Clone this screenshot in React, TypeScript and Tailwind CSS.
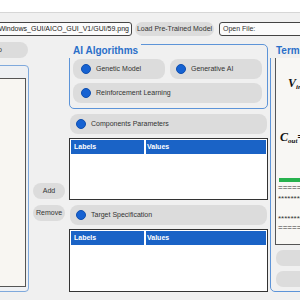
import React from "react";

function Pill({ label, className = "" }: { label: string; className?: string }) {
  return (
    <div className={`flex items-center h-[20px] rounded-[8px] bg-[#dcdcdc] ${className}`}>
      <div className="w-[10px] h-[10px] rounded-full bg-[#1662d2] border border-[#0f4fb0] shrink-0" />
      <span className="ml-[5px] text-[7px] text-[#333] whitespace-nowrap">{label}</span>
    </div>
  );
}

function Table({ h }: { h: string }) {
  return (
    <div className={`${h} border border-[#333] bg-white p-[1px]`}>
      <div className="flex gap-[2px] h-[14px]">
        <div className="w-[73px] bg-[#1a63c6] text-white font-bold text-[7px] leading-[14px] pl-[3px]">Labels</div>
        <div className="flex-1 bg-[#1a63c6] text-white font-bold text-[7px] leading-[14px] pl-[1px]">Values</div>
      </div>
    </div>
  );
}

export default function App() {
  return (
    <div className="w-[300px] h-[300px] overflow-hidden bg-[#f0f0f0] font-['Liberation_Sans',Arial,sans-serif] text-[#222]">
      <div className="h-[13px] bg-white border-b border-[#d6d6d6]" />
      {/* top row */}
      <div className="flex items-center h-[14px] mt-[9px] ml-[-60px] w-[420px]">
        <div className="w-[192px] h-[14px] border border-[#444] rounded-[3px] bg-[#fbfbfb] flex items-center justify-end pr-[2px] overflow-hidden">
          <span className="text-[7px] whitespace-nowrap text-[#222]">-Windows_GUI/AICO_GUI_V1/GUI/59.png</span>
        </div>
        <div className="ml-[3px] w-[79px] h-[14px] rounded-full bg-[#dcdcdc] flex items-center justify-center">
          <span className="text-[7px] whitespace-nowrap text-[#333]">Load Pre-Trained Model</span>
        </div>
        <div className="ml-[5px] w-[120px] h-[14px] border border-[#444] rounded-[3px] bg-[#fbfbfb] flex items-center pl-[3px]">
          <span className="text-[7px] whitespace-nowrap text-[#333]">Open File:</span>
        </div>
      </div>
      {/* main */}
      <div className="flex mt-[6px] ml-[-60px] w-[460px]">
        {/* left column */}
        <div className="w-[89px] flex flex-col shrink-0">
          <div className="w-[88px] h-[16px] rounded-full bg-[#dcdcdc] flex items-center justify-center">
            <span className="text-[7px] text-[#333] whitespace-nowrap">Load Photo</span>
          </div>
          <div className="mt-[7px] h-[227px] border border-[#7fa9dc] rounded-[4px] bg-[#eef0f3] pt-[12px] pr-[2px] pb-[4px]">
            <div className="h-full border border-[#555] bg-[#f8f6f2]" />
          </div>
        </div>
        {/* add/remove */}
        <div className="ml-[4px] w-[32px] flex flex-col pt-[141px] shrink-0">
          <div className="h-[16px] rounded-full bg-[#dcdcdc] flex items-center justify-center text-[7px] text-[#333]">Add</div>
          <div className="mt-[6px] h-[16px] rounded-full bg-[#dcdcdc] flex items-center justify-center text-[7px] text-[#333]">Remove</div>
        </div>
        {/* middle */}
        <div className="ml-[4px] w-[199px] flex flex-col shrink-0">
          <div className="relative mt-[2px] h-[65px] border border-[#5d94d8] rounded-[5px] pt-[14px] pl-[3px] pr-[5px]">
            <div className="absolute left-[-1px] top-[-1px] h-[14px] bg-[#f0f0f0] pl-[4px] pr-[3px] text-[10px] leading-[14px] font-bold text-[#2a6fc9] whitespace-nowrap">AI Algorithms</div>
            <div className="grid grid-cols-2 gap-x-[5px] gap-y-[4px]">
              <Pill label="Genetic Model" className="pl-[8px]" />
              <Pill label="Generative AI" className="pl-[6px]" />
              <Pill label="Reinforcement Learning" className="col-span-2 pl-[8px]" />
            </div>
          </div>
          <Pill label="Components Parameters" className="mt-[5px] ml-[1px] mr-[1px] pl-[6px]" />
          <div className="mt-[4px]"><Table h="h-[62px]" /></div>
          <Pill label="Target Specification" className="mt-[5px] ml-[1px] mr-[1px] pl-[6px]" />
          <div className="mt-[4px]"><Table h="h-[63px]" /></div>
        </div>
        {/* terminal */}
        <div className="ml-[2px] w-[110px] shrink-0">
          <div className="relative mt-[2px] h-[248px] border border-[#5d94d8] rounded-[5px] pt-[12px] pl-[4px]">
            <div className="absolute left-[-1px] top-[-1px] h-[14px] bg-[#f0f0f0] pl-[6px] pr-[3px] text-[10px] leading-[14px] font-bold text-[#2a6fc9] whitespace-nowrap">Terminal</div>
            <div className="h-[188px] border border-[#555] bg-[#f8f7f4] flex flex-col overflow-hidden">
              <div className="mt-[19px] pl-[12px] h-[12px] leading-[12px] text-[12px] font-bold italic font-['Liberation_Serif',serif] whitespace-nowrap text-[#111]">
                V<sub className="text-[7px]">in</sub>
              </div>
              <div className="mt-[42px] pl-[4px] h-[12px] leading-[12px] text-[12px] font-bold italic font-['Liberation_Serif',serif] whitespace-nowrap text-[#111]">
                C<sub className="text-[7px]">out</sub>=
              </div>
              <div className="mt-[35px] ml-[3px] h-[4px] bg-[#27b24e]" />
              <div className="mt-[2px] pl-[2px] h-[8px] leading-[8px] text-[8px] whitespace-nowrap text-[#333]">==============================</div>
              <div className="mt-[3px] pl-[2px] h-[8px] leading-[8px] text-[8px] whitespace-nowrap text-[#333]">****************************</div>
              <div className="mt-[12px] pl-[2px] h-[8px] leading-[8px] text-[8px] whitespace-nowrap text-[#333]">****************************</div>
              <div className="mt-[1px] pl-[2px] h-[8px] leading-[8px] text-[8px] whitespace-nowrap text-[#333]">==============================</div>
            </div>
            <div className="mt-[5px] ml-[1px] h-[16px] rounded-[7px] bg-[#dcdcdc]" />
            <div className="mt-[5px] ml-[1px] h-[16px] rounded-[7px] bg-[#dcdcdc]" />
          </div>
        </div>
      </div>
    </div>
  );
}
